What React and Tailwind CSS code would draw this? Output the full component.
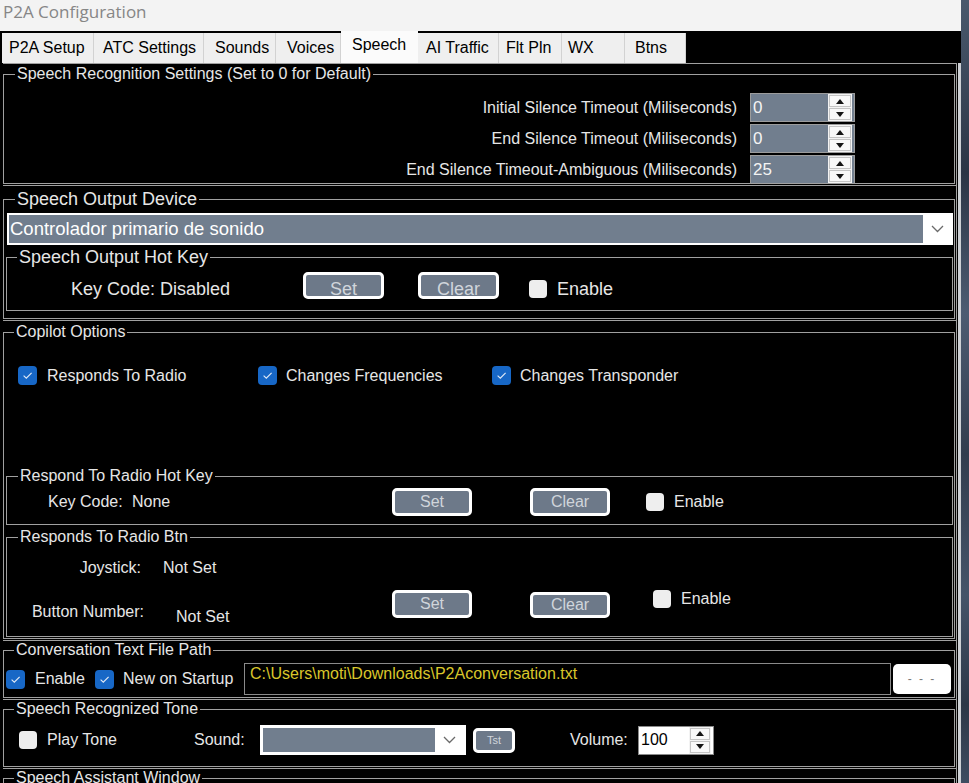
import React from "react";

const tabs = [
  { label: "P2A Setup", cls: "w-[92px] pl-[7px]" },
  { label: "ATC Settings", cls: "w-[110px] pl-[9px]" },
  { label: "Sounds", cls: "w-[72px] pl-[11px]" },
  { label: "Voices", cls: "w-[65px] pl-[11px]" },
  { label: "Speech", cls: "w-[77px] pl-[11px]", active: true },
  { label: "AI Traffic", cls: "w-[81px] pl-[8px]" },
  { label: "Flt Pln", cls: "w-[63px] pl-[7px]" },
  { label: "WX", cls: "w-[63px] pl-[6px]" },
  { label: "Btns", cls: "w-[61px] pl-[10px]" },
];

function TriUp() {
  return (
    <svg width="8" height="5" viewBox="0 0 8 5">
      <path d="M0 5 L4 0 L8 5 Z" fill="#141414" />
    </svg>
  );
}

function TriDown() {
  return (
    <svg width="8" height="5" viewBox="0 0 8 5">
      <path d="M0 0 L8 0 L4 5 Z" fill="#141414" />
    </svg>
  );
}

function Chevron() {
  return (
    <svg width="13" height="8" viewBox="0 0 13 8">
      <polyline points="1,1 6.5,6.5 12,1" fill="none" stroke="#6a6a6a" strokeWidth="1.3" />
    </svg>
  );
}

function SpinButtons({ className }) {
  return (
    <div className={`flex flex-col gap-[1px] bg-[#f3f3f3] p-[1px] ${className}`}>
      <div className="flex flex-1 items-center justify-center border border-[#c4c4c4] bg-[#f8f8f8]">
        <TriUp />
      </div>
      <div className="flex flex-1 items-center justify-center border border-[#c4c4c4] bg-[#f8f8f8]">
        <TriDown />
      </div>
    </div>
  );
}

function SlateSpinner({ value }) {
  return (
    <div className="flex h-[29px] w-[105px] border border-[#9c9c9c] bg-[#717e8e] pr-[2px]">
      <div className="flex flex-1 items-center pl-[2px] text-[17px] text-[#f4f4f4]">{value}</div>
      <SpinButtons className="w-[24px]" />
    </div>
  );
}

function Box({ checked, className = "" }) {
  if (checked) {
    return (
      <span className={`flex h-[19px] w-[19px] shrink-0 items-center justify-center rounded-[4px] bg-[#1767c6] ${className}`}>
        <svg width="11" height="9" viewBox="0 0 11 9">
          <path d="M1.6 4.6 L4.3 7.1 L9.6 1.8" fill="none" stroke="#dfe9f7" strokeWidth="1.2" />
        </svg>
      </span>
    );
  }
  return <span className={`block h-[18px] w-[18px] shrink-0 rounded-[4px] bg-[#eeeeee] ${className}`} />;
}

function WinBtn({ children, className }) {
  return (
    <div
      className={`flex shrink-0 justify-center overflow-hidden rounded-[5px] border-[3px] border-white bg-[#6d7989] text-[#d0d5db] ${className}`}
    >
      {children}
    </div>
  );
}

export default function App() {
  return (
    <div className="flex h-[783px] w-[969px] overflow-hidden bg-black font-['Liberation_Sans',Arial,sans-serif]">
      <div className="flex w-[961px] shrink-0 flex-col">
        {/* window title */}
        <div className="h-[31px] shrink-0 bg-[#f3f3f3] pl-[3px] font-['Open_Sans',sans-serif] text-[17px] leading-[23px] text-[#868686]">
          P2A Configuration
        </div>

        {/* tab strip */}
        <div className="flex h-[32px] shrink-0 items-end bg-black pl-[2px]">
          {tabs.map((t) =>
            t.active ? (
              <div
                key={t.label}
                className={`flex h-[32px] items-center bg-[#fbfbfb] pb-[4px] text-[16px] text-black ${t.cls}`}
              >
                {t.label}
              </div>
            ) : (
              <div
                key={t.label}
                className={`flex h-[30px] items-center border-r border-[#d2d2d2] bg-[#efefef] text-[16px] text-black ${t.cls}`}
              >
                {t.label}
              </div>
            )
          )}
        </div>

        {/* tab page */}
        <div className="flex min-h-0 flex-1 flex-col overflow-hidden border-r-[3px] border-[#cdd0d4] bg-black pl-[3px] pr-[1px] text-[#e6e6e6]">
          {/* recognition timeouts */}
          <div className="h-[122px] shrink-0 border-r border-t border-[#a0a0a0] pr-[1px]">
            <fieldset className="mt-[1px] h-[119px] overflow-hidden border border-[#a0a0a0]">
              <legend className="ml-[11px] px-[2px] text-[16px] leading-[18px]">
                Speech Recognition Settings (Set to 0 for Default)
              </legend>
              <div className="flex flex-col gap-[2px] pr-[99px] pt-[10px] text-[16px]">
                <div className="flex h-[29px] items-center justify-end gap-[13px]">
                  <span>Initial Silence Timeout (Miliseconds)</span>
                  <SlateSpinner value="0" />
                </div>
                <div className="flex h-[29px] items-center justify-end gap-[13px]">
                  <span>End Silence Timeout (Miliseconds)</span>
                  <SlateSpinner value="0" />
                </div>
                <div className="flex h-[29px] items-center justify-end gap-[13px]">
                  <span>End Silence Timeout-Ambiguous (Miliseconds)</span>
                  <SlateSpinner value="25" />
                </div>
              </div>
            </fieldset>
          </div>

          {/* output device */}
          <div className="h-[135px] shrink-0 border-r border-t border-[#a0a0a0] pr-[1px]">
            <fieldset className="mt-[3px] h-[130px] border border-[#a0a0a0]">
              <legend className="ml-[11px] px-[2px] text-[18px] leading-[20px]">Speech Output Device</legend>
              <div className="ml-[3px] mr-[1px] mt-[4px] flex h-[32px] border-2 border-white bg-white">
                <div className="flex flex-1 items-center bg-[#717e8e] pl-[1px] text-[18.5px] text-white">
                  Controlador primario de sonido
                </div>
                <div className="flex w-[28px] items-center justify-center">
                  <Chevron />
                </div>
              </div>
              <fieldset className="ml-[2px] mr-[1px] mt-[2px] h-[64px] border border-[#a0a0a0]">
                <legend className="ml-[10px] px-[2px] text-[18px] leading-[20px]">Speech Output Hot Key</legend>
                <div className="mt-[5px] flex h-[27px] items-center text-[18px]">
                  <span className="ml-[64px] mt-[7px] w-[232px] shrink-0">Key Code: Disabled</span>
                  <WinBtn className="h-[27px] w-[81px] items-start pt-[4px] text-[18px] leading-[20px]">Set</WinBtn>
                  <WinBtn className="ml-[34px] h-[27px] w-[81px] items-start pt-[4px] text-[18px] leading-[20px]">
                    Clear
                  </WinBtn>
                  <Box className="ml-[30px] mt-[6px]" />
                  <span className="ml-[10px] mt-[7px]">Enable</span>
                </div>
              </fieldset>
            </fieldset>
          </div>

          {/* copilot */}
          <div className="h-[320px] shrink-0 border-r border-t border-[#a0a0a0] pr-[1px]">
            <fieldset className="mt-[2px] h-[316px] border border-[#a0a0a0]">
              <legend className="ml-[10px] px-[2px] text-[16px] leading-[18px]">Copilot Options</legend>
              <div className="mt-[25px] flex h-[19px] items-center pl-[14px] text-[16px]">
                <div className="flex w-[240px] items-center gap-[10px]">
                  <Box checked />
                  <span>Responds To Radio</span>
                </div>
                <div className="flex w-[234px] items-center gap-[9px]">
                  <Box checked />
                  <span>Changes Frequencies</span>
                </div>
                <div className="flex items-center gap-[9px]">
                  <Box checked />
                  <span>Changes Transponder</span>
                </div>
              </div>

              <fieldset className="ml-[2px] mr-[1px] mt-[82px] h-[58px] border border-[#a0a0a0]">
                <legend className="ml-[11px] px-[2px] text-[16px] leading-[18px]">Respond To Radio Hot Key</legend>
                <div className="mt-[3px] flex h-[28px] items-center text-[16px]">
                  <span className="ml-[41px] w-[84px] shrink-0">Key Code:</span>
                  <span className="w-[260px] shrink-0">None</span>
                  <WinBtn className="h-[28px] w-[80px] items-center text-[16px]">Set</WinBtn>
                  <WinBtn className="ml-[58px] h-[28px] w-[80px] items-center text-[16px]">Clear</WinBtn>
                  <Box className="ml-[36px]" />
                  <span className="ml-[10px]">Enable</span>
                </div>
              </fieldset>

              <fieldset className="ml-[2px] mr-[1px] mt-[3px] h-[109px] border border-[#a0a0a0]">
                <legend className="ml-[11px] px-[2px] text-[16px] leading-[18px]">Responds To Radio Btn</legend>
                <div className="flex items-start text-[16px]">
                  <div className="w-[385px] shrink-0 pt-[13px]">
                    <div className="flex h-[18px] items-center">
                      <span className="w-[134px] text-right">Joystick:</span>
                      <span className="ml-[22px]">Not Set</span>
                    </div>
                    <div className="mt-[26px] flex h-[18px] items-center">
                      <span className="w-[137px] text-right">Button Number:</span>
                      <span className="ml-[32px] mt-[10px]">Not Set</span>
                    </div>
                  </div>
                  <WinBtn className="mt-[44px] h-[28px] w-[80px] items-center text-[16px]">Set</WinBtn>
                  <WinBtn className="ml-[58px] mt-[46px] h-[26px] w-[80px] items-center text-[16px]">Clear</WinBtn>
                  <Box className="ml-[43px] mt-[44px]" />
                  <span className="ml-[10px] mt-[44px] leading-[18px]">Enable</span>
                </div>
              </fieldset>
            </fieldset>
          </div>

          {/* conversation log */}
          <div className="h-[59px] shrink-0 border-r border-t border-[#a0a0a0] pr-[1px]">
            <fieldset className="h-[57px] border border-[#a0a0a0]">
              <legend className="ml-[10px] px-[2px] text-[16px] leading-[18px]">Conversation Text File Path</legend>
              <div className="mt-[4px] flex h-[32px] items-center text-[16px]">
                <Box checked className="ml-[2px]" />
                <span className="ml-[10px] w-[60px] shrink-0">Enable</span>
                <Box checked />
                <span className="ml-[9px] w-[121px] shrink-0">New on Startup</span>
                <div className="h-[32px] w-[647px] shrink-0 border border-[#8a8a8a] pl-[5px] leading-[20px] text-[#d9c62b]">
                  {"C:\\Users\\moti\\Downloads\\P2Aconversation.txt"}
                </div>
                <div className="ml-[2px] flex h-[30px] w-[58px] items-center justify-center rounded-[5px] bg-white text-[12px] tracking-[2px] text-[#7a7a7a]">
                  - - -
                </div>
              </div>
            </fieldset>
          </div>

          {/* recognition tone */}
          <div className="h-[69px] shrink-0 border-r border-t border-[#a0a0a0] pr-[1px]">
            <fieldset className="h-[67px] border border-[#a0a0a0]">
              <legend className="ml-[10px] px-[2px] text-[16px] leading-[18px]">Speech Recognized Tone</legend>
              <div className="mt-[6px] flex h-[32px] items-center text-[16px]">
                <Box className="ml-[15px]" />
                <span className="ml-[10px] w-[147px] shrink-0">Play Tone</span>
                <span className="w-[66px] shrink-0">Sound:</span>
                <div className="flex h-[30px] w-[206px] shrink-0 border-[3px] border-white bg-white">
                  <div className="flex-1 bg-[#717e8e]" />
                  <div className="flex w-[28px] items-center justify-center">
                    <Chevron />
                  </div>
                </div>
                <div className="ml-[7px] flex h-[25px] w-[42px] shrink-0 items-center justify-center rounded-[5px] border-[3px] border-white bg-[#6d7989] text-[11px] text-[#d0d5db]">
                  Tst
                </div>
                <span className="ml-[55px] w-[68px] shrink-0">Volume:</span>
                <div className="flex h-[29px] w-[76px] shrink-0 border border-[#8a8a8a] bg-white pr-[2px]">
                  <div className="flex flex-1 items-center pl-[2px] text-[16px] text-black">100</div>
                  <SpinButtons className="w-[22px]" />
                </div>
              </div>
            </fieldset>
          </div>

          {/* assistant window */}
          <div className="flex-1 border-r border-t border-[#a0a0a0] pr-[1px]">
            <fieldset className="h-[40px] border border-[#a0a0a0]">
              <legend className="ml-[10px] px-[2px] text-[16px] leading-[18px]">Speech Assistant Window</legend>
            </fieldset>
          </div>
        </div>
      </div>

      {/* desktop behind the window */}
      <div className="flex-1 bg-[linear-gradient(180deg,#4a596d_0%,#2b3545_22%,#4d5c72_40%,#323d4e_58%,#455469_76%,#2c3747_90%,#3e4c60_100%)]" />
    </div>
  );
}
